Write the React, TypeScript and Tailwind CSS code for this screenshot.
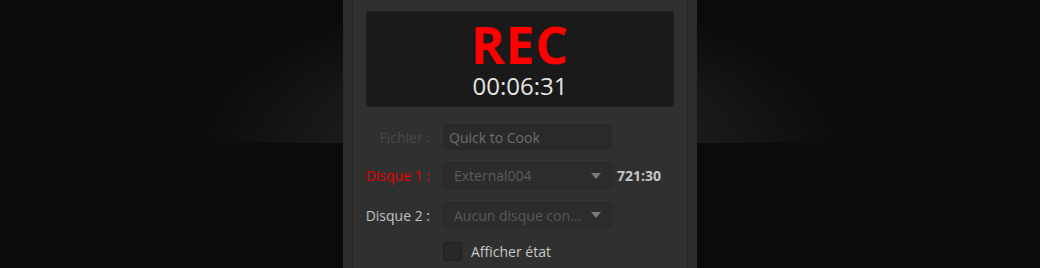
const font = "font-['Open_Sans',_'Liberation_Sans',_sans-serif]";

function Arrow() {
  return (
    <svg width="10" height="6" viewBox="0 0 10 6" className="shrink-0">
      <path d="M0 0 L10 0 L5 6 Z" fill="#7a7a7a" />
    </svg>
  );
}

function Row({
  label,
  labelClass,
  children,
}: {
  label: string;
  labelClass: string;
  children: React.ReactNode;
}) {
  return (
    <div className="flex items-center">
      <div className={`w-[78px] shrink-0 text-right text-[14px] ${labelClass}`}>{label}</div>
      <div className="ml-[13px] flex items-center">{children}</div>
    </div>
  );
}

export default function App() {
  return (
    <div
      className={`${font} flex h-[268px] w-full justify-center overflow-hidden bg-[#0b0b0b] bg-[radial-gradient(ellipse_330px_145px_at_50%_100%,#2c2c2c_0%,#1d1d1d_45%,#0b0b0b_100%)] bg-[length:100%_143px] bg-no-repeat`}
    >
      <div className="flex h-[268px] w-[354px] bg-[#2c2c2c] px-[9px]">
        <div className="flex flex-1 flex-col border-x border-[#242424] bg-[#303030] px-[13px] pt-[11px]">
          <div className="flex h-[96px] flex-col items-center rounded-[3px] border border-[#222] bg-[#1a1a1a]">
            <div className="mt-[6px] text-[52px] leading-[52px] font-bold tracking-[0.5px] text-[#ff0000]">
              REC
            </div>
            <div className="mt-[4px] text-[24px] leading-[24px] text-[#e4e4e4]">00:06:31</div>
          </div>

          <div className="mt-[17px] -ml-[14px] flex flex-col">
            <Row label="Fichier :" labelClass="text-[#4a4a4a]">
              <div className="flex h-[26px] w-[169px] items-center rounded-[4px] border border-[#282828] bg-[#2a2a2a] px-[5px] text-[14px] text-[#6e6e6e]">
                Quick to Cook
              </div>
            </Row>
            <div className="mt-[12px]">
              <Row label="Disque 1 :" labelClass="text-[#e80000]">
                <div className="flex h-[27px] w-[169px] items-center justify-between rounded-[4px] border border-[#282828] bg-[#2c2c2c] pl-[10px] pr-[10px] text-[14px] text-[#5c5c5c]">
                  <span>External004</span>
                  <Arrow />
                </div>
                <span className="ml-[5px] text-[14px] font-bold text-[#c6c6c6]">721:30</span>
              </Row>
            </div>
            <div className="mt-[13px]">
              <Row label="Disque 2 :" labelClass="text-[#c2c2c2]">
                <div className="flex h-[26px] w-[169px] items-center justify-between rounded-[4px] border border-[#282828] bg-[#2c2c2c] pl-[10px] pr-[10px] text-[14px] text-[#595959]">
                  <span>Aucun disque con...</span>
                  <Arrow />
                </div>
              </Row>
            </div>
            <div className="mt-[13px]">
              <Row label="" labelClass="">
                <div className="h-[19px] w-[19px] rounded-[3px] border border-[#1f1f1f] bg-[#282828]" />
                <span className="ml-[9px] text-[14px] text-[#c8c8c8]">Afficher état</span>
              </Row>
            </div>
          </div>
        </div>
      </div>
    </div>
  );
}
